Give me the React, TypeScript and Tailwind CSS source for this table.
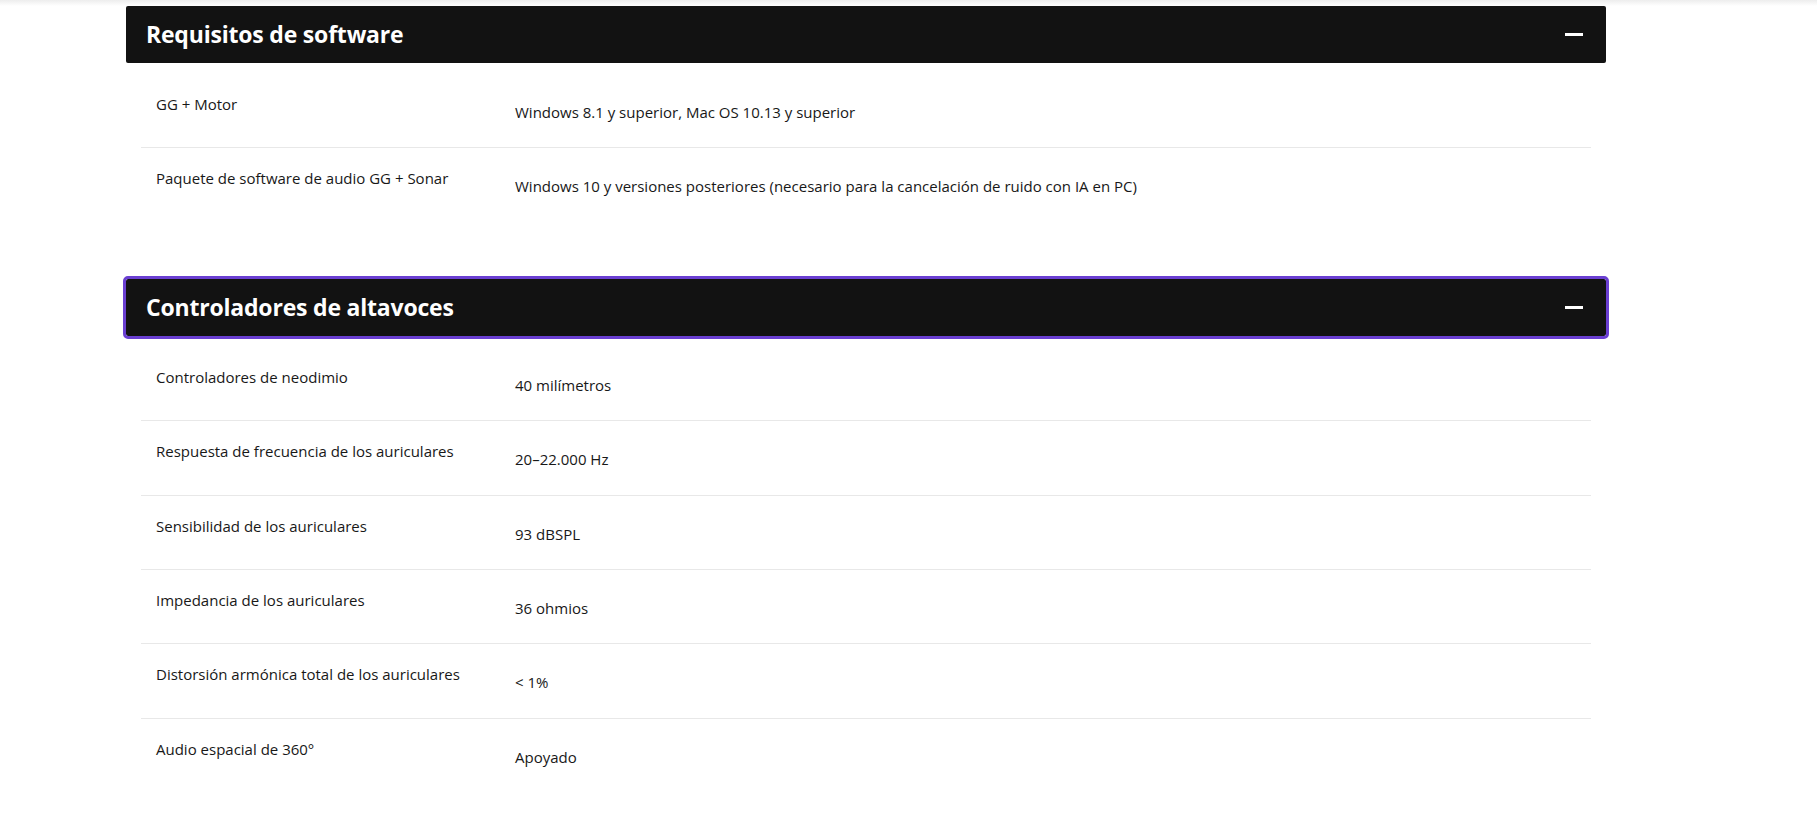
import React from 'react'

const software = [
  { label: 'GG + Motor', value: 'Windows 8.1 y superior, Mac OS 10.13 y superior' },
  {
    label: 'Paquete de software de audio GG + Sonar',
    value: 'Windows 10 y versiones posteriores (necesario para la cancelación de ruido con IA en PC)'
  }
]

const drivers = [
  { label: 'Controladores de neodimio', value: '40 milímetros' },
  { label: 'Respuesta de frecuencia de los auriculares', value: '20–22.000 Hz' },
  { label: 'Sensibilidad de los auriculares', value: '93 dBSPL' },
  { label: 'Impedancia de los auriculares', value: '36 ohmios' },
  { label: 'Distorsión armónica total de los auriculares', value: '< 1%' },
  { label: 'Audio espacial de 360°', value: 'Apoyado' }
]

type Spec = { label: string; value: string }

function SpecSection({ title, rows, focused }: { title: string; rows: Spec[]; focused?: boolean }) {
  return (
    <section>
      {/* Header */}
      <div
        className={`flex h-[57px] items-center justify-between rounded-[2px] bg-[#121212] pl-[20px] pr-[23px] ${
          focused ? 'outline-3 outline-[#6a3fd1]' : ''
        }`}
      >
        <h2 className="text-[23px] font-bold tracking-[-0.2px] text-white">{title}</h2>
        <span className="block h-[3px] w-[18px] bg-white"></span>
      </div>

      {/* Rows */}
      <div className="px-[15px] pt-[11px]">
        {rows.map((row, i) => (
          <div
            key={row.label}
            className={`flex h-[74.4px] text-[15px] leading-[22px] text-[#181818] ${
              i < rows.length - 1 ? 'border-b border-[#e8e8e8]' : ''
            }`}
          >
            <div className="w-[374px] shrink-0 pl-[15px] pt-[19px]">{row.label}</div>
            <div className="flex-1 pt-[27px]">{row.value}</div>
          </div>
        ))}
      </div>
    </section>
  )
}

export default function App() {
  return (
    <div className="min-h-[830px] bg-white" style={{ fontFamily: '"Open Sans", "Noto Sans", sans-serif' }}>
      <div className="h-[6px] bg-gradient-to-b from-[#ededed] to-white"></div>
      <div className="ml-[126px] w-[1480px]">
        <SpecSection title="Requisitos de software" rows={software} />
        <div className="mt-[56px]">
          <SpecSection title="Controladores de altavoces" rows={drivers} focused />
        </div>
      </div>
    </div>
  )
}
